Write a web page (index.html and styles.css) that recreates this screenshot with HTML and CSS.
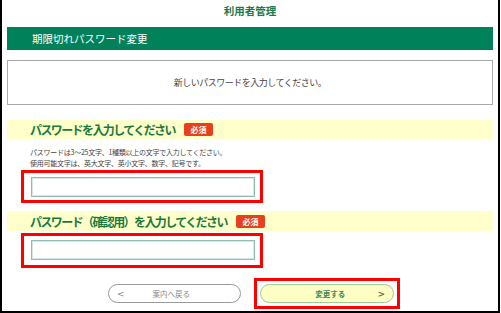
FILE: index.html
```html
<!DOCTYPE html>
<html lang="ja">
<head>
    <meta charset="UTF-8">
    <title>利用者管理</title>
    <link rel="stylesheet" href="styles.css">
</head>
<body>
    <div class="frame">
        <div class="page-title">利用者管理</div>
        <div class="bar">期限切れパスワード変更</div>
        <div class="notice">新しいパスワードを入力してください。</div>

        <div class="field-head">パスワードを入力してください<span class="badge">必須</span></div>
        <div class="hint">
            <div>パスワードは3～25文字、1種類以上の文字で入力してください。</div>
            <div>使用可能文字は、英大文字、英小文字、数字、記号です。</div>
        </div>
        <div class="mark mark-first">
            <input class="field-input" type="password">
        </div>

        <div class="field-head field-head-second">パスワード（確認用）を入力してください<span class="badge">必須</span></div>
        <div class="mark mark-second">
            <input class="field-input" type="password">
        </div>

        <div class="actions">
            <button class="btn btn-back"><span class="arrow">&lt;</span><span class="label">案内へ戻る</span></button>
            <div class="mark mark-btn">
                <button class="btn btn-submit"><span class="label">変更する</span><span class="arrow">&gt;</span></button>
            </div>
        </div>
    </div>
</body>
</html>
```

FILE: styles.css
```css
* {
    margin: 0;
    padding: 0;
    box-sizing: border-box;
}

body {
    font-family: "Noto Sans CJK JP", "Noto Sans", sans-serif;
    background: #fff;
    color: #333;
}

.frame {
    width: 500px;
    height: 313px;
    border: 2px solid #000;
    border-top: none;
    padding: 0 5px;
}

.page-title {
    height: 27px;
    line-height: 22px;
    text-align: center;
    font-size: 10.5px;
    font-weight: bold;
    color: #1c7a4c;
}

.bar {
    height: 23px;
    line-height: 23px;
    padding-left: 25px;
    background: #00815a;
    color: #fff;
    font-size: 10.5px;
}

.notice {
    margin-top: 10px;
    height: 45px;
    border: 1px solid #aaa;
    display: flex;
    align-items: center;
    justify-content: center;
    font-size: 9px;
    letter-spacing: -0.5px;
    color: #444;
}

/* Field headings on the yellow band */
.field-head {
    margin-top: 15px;
    height: 19px;
    display: flex;
    align-items: center;
    padding-left: 23px;
    background: #ffffcc;
    color: #1a7a3e;
    font-size: 12px;
    font-weight: bold;
    letter-spacing: -1.6px;
}

.field-head-second {
    margin-top: 8px;
    height: 20px;
}

.badge {
    margin-left: 9px;
    width: 29px;
    height: 13px;
    line-height: 13px;
    border-radius: 2px;
    background: #e8401c;
    color: #fff;
    font-size: 8px;
    letter-spacing: 0;
    text-align: center;
}

.hint {
    margin-top: 8px;
    padding-left: 23px;
    font-size: 7px;
    line-height: 11px;
    letter-spacing: -0.25px;
    color: #444;
}

/* Red highlight frames */
.mark {
    border: 3px solid #f00;
}

.mark-first {
    margin: 1px 0 0 14px;
    width: 242px;
    height: 33px;
    padding: 4px 0 0 7px;
}

.mark-second {
    margin: 2px 0 0 14px;
    width: 242px;
    height: 35px;
    padding: 4px 0 0 7px;
}

.field-input {
    display: block;
    width: 224px;
    height: 20px;
    border: 1px solid #8fbdb4;
    box-shadow: inset 0 0 0 1px #d5e8e4;
    background: #fff;
    outline: none;
}

.actions {
    margin-top: 10px;
    display: flex;
    align-items: center;
}

.btn {
    display: flex;
    align-items: center;
    height: 19px;
    border-radius: 10px;
    font-family: inherit;
    font-size: 7.5px;
}

.btn .label {
    flex: 1;
    text-align: center;
}

.btn .arrow {
    font-size: 9px;
    font-family: "DejaVu Sans", sans-serif;
}

.btn-back {
    margin-left: 101px;
    width: 133px;
    border: 1px solid #999;
    background: #fff;
    color: #888;
    padding: 0 22px 0 8px;
}

.mark-btn {
    margin-left: 13px;
    width: 146px;
    height: 31px;
    padding: 3px;
}

.btn-submit {
    width: 134px;
    border: 1px solid #9ccc9c;
    background: #ffffc4;
    color: #3b8a5c;
    font-weight: bold;
    padding: 0 8px 0 22px;
}

.btn-submit .arrow {
    color: #4a7a5a;
}
```
